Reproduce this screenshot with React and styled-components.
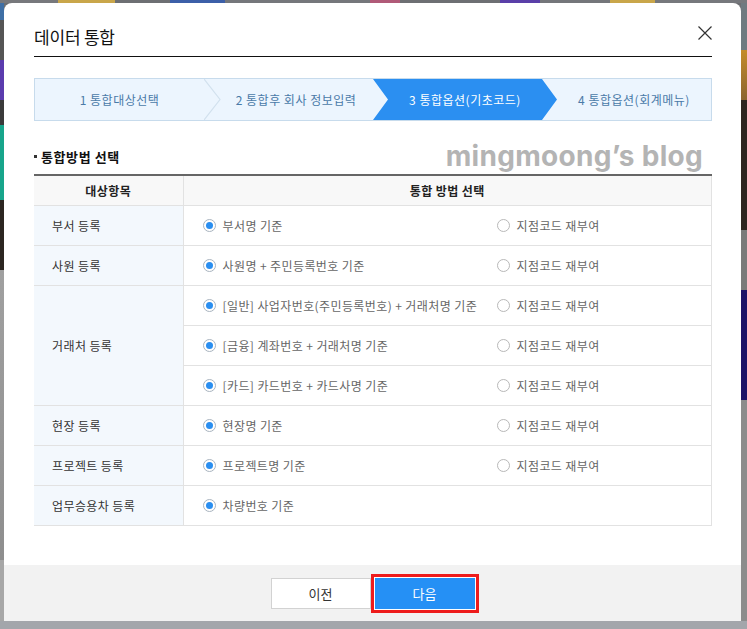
import React from 'react';
import styled, { createGlobalStyle } from 'styled-components';

const GlobalStyle = createGlobalStyle`
    * { box-sizing: border-box; }
    body {
        margin: 0;
        font-family: "Noto Sans CJK KR", "Noto Sans", sans-serif;
        color: #333;
    }
`;

const Backdrop = styled.div`
    width: 747px;
    height: 629px;
    padding: 3px 6px 8px 4px;
    background:
        linear-gradient(to right, #77787c 0, #77787c 58px, #c9a64a 58px, #c9a64a 115px, #6d6f73 115px, #6d6f73 170px, #3c5fa8 170px, #3c5fa8 225px, #75777b 225px, #75777b 370px, #b05a78 370px, #b05a78 400px, #6d6f73 400px, #6d6f73 500px, #5a3fa8 500px, #5a3fa8 540px, #74767a 540px, #74767a 610px, #c9a64a 610px, #c9a64a 655px, #76787c 655px) left top / 100% 3px no-repeat,
        linear-gradient(#a3a6ab, #a3a6ab) left bottom / 100% 8px no-repeat,
        linear-gradient(to bottom, #3f6fa5 0, #3f6fa5 20px, #555 20px, #555 60px, #5b3cae 60px, #5b3cae 100px, #3a3a3a 100px, #3a3a3a 125px, #17a58b 125px, #17a58b 200px, #2c2621 200px, #2c2621 270px, #a0a0a0 270px, #8e8e8e 560px, #a7a7a7 560px) left top / 4px 100% no-repeat,
        linear-gradient(to bottom, #6f7a80 0, #6f7a80 50px, #c48c2a 50px, #8a6530 100px, #2d2520 100px, #2d2520 230px, #7a7a7a 230px, #7a7a7a 290px, #1b1266 290px, #1b1266 400px, #8c8c8c 400px) right top / 6px 100% no-repeat,
        #6d6f73;
`;

const Modal = styled.div`
    height: 100%;
    background: #fff;
    border-radius: 8px 8px 0 0;
    display: flex;
    flex-direction: column;
    overflow: hidden;
`;

const Body = styled.div`
    padding: 0 29px 0 30px;
`;

const Header = styled.div`
    height: 54px;
    padding-top: 14px;
    display: flex;
    align-items: center;
    justify-content: space-between;
    border-bottom: 1px solid #111;
`;

const Title = styled.h1`
    margin: 0;
    font-size: 17px;
    font-weight: 400;
    color: #111;
    letter-spacing: -0.2px;
`;

const CloseButton = styled.button`
    width: 14px;
    height: 14px;
    padding: 0;
    border: 0;
    background: none;
    margin-top: -8px;
    display: flex;
    cursor: pointer;
`;

const Stepper = styled.div`
    margin-top: 21px;
    height: 43px;
    display: flex;
    background: #ecf5fe;
    border: 1px solid #c7dbec;
`;

const Step = styled.div`
    position: relative;
    flex: 0 0 ${p => (p.$active ? 'calc(25% + 15px)' : '25%')};
    margin-right: ${p => (p.$active ? '-15px' : '0')};
    padding: 0 ${p => (p.$active ? '15px' : '0')} 0 ${p => (p.$first ? '0' : '15px')};
    display: flex;
    align-items: center;
    justify-content: center;
    font-size: 12px;
    letter-spacing: 0.5px;
    color: ${p => (p.$active ? '#fff' : '#4a7aa8')};
    background: ${p => (p.$active ? '#2b8ff1' : 'transparent')};
    z-index: ${p => (p.$active ? 1 : 0)};
    clip-path: ${p => (p.$active
        ? 'polygon(0 0, calc(100% - 15px) 0, 100% 50%, calc(100% - 15px) 100%, 0 100%, 15px 50%)'
        : 'none')};
`;

const Chevron = styled.svg`
    position: absolute;
    left: 100%;
    top: 0;
    width: 17px;
    height: 100%;
    z-index: 1;
`;

const SectionRow = styled.div`
    margin-top: 18px;
    height: 34px;
    display: flex;
    align-items: center;
    justify-content: space-between;
    padding-right: 9px;
`;

const SectionTitle = styled.h2`
    margin: 0;
    font-size: 13px;
    font-weight: 700;
    letter-spacing: 0.6px;
    color: #111;
    display: flex;
    align-items: center;
    gap: 4px;

    &::before {
        content: '';
        width: 3px;
        height: 3px;
        background: #333;
    }
`;

const Watermark = styled.span`
    font-family: Inter, "Noto Sans", sans-serif;
    font-size: 28px;
    font-weight: 700;
    letter-spacing: 0.3px;
    color: #b4b4b4;
`;

const Table = styled.table`
    margin-top: 1px;
    width: 100%;
    border-collapse: collapse;
    table-layout: fixed;
    border-top: 2px solid #666;
    border-right: 1px solid #e2e2e2;
    font-size: 12px;
    letter-spacing: 0.4px;
`;

const HeadCell = styled.th`
    height: 30px;
    padding: 0;
    background: #f8f8f8;
    font-weight: 700;
    color: #222;
    border-bottom: 1px solid #e2e2e2;
    border-left: ${p => (p.$divided ? '1px solid #e2e2e2' : '0')};
`;

const LabelCell = styled.td`
    height: 40px;
    padding: 0 0 0 18px;
    background: #f3f8fd;
    color: #333;
    border-bottom: 1px solid #e2e2e2;
`;

const OptionCell = styled.td`
    height: 40px;
    padding: 0 0 0 19px;
    border-left: 1px solid #e2e2e2;
    border-bottom: 1px solid #e2e2e2;
`;

const OptionRow = styled.div`
    display: grid;
    grid-template-columns: 294px 1fr;
    align-items: center;
`;

const Option = styled.label`
    display: flex;
    align-items: center;
    gap: 7px;
    color: #666;
    white-space: nowrap;
`;

const Radio = styled.span`
    width: 13px;
    height: 13px;
    flex: none;
    border-radius: 50%;
    border: 1px solid ${p => (p.$checked ? '#a9b4bf' : '#b8b8b8')};
    background: #fff;
    display: flex;
    align-items: center;
    justify-content: center;

    &::after {
        content: '';
        width: 7px;
        height: 7px;
        border-radius: 50%;
        background: ${p => (p.$checked ? '#2a8ef0' : 'transparent')};
    }
`;

const Footer = styled.div`
    margin-top: auto;
    height: 56px;
    background: #f2f2f2;
    display: flex;
    align-items: center;
    justify-content: center;
    gap: 4px;
`;

const Button = styled.button`
    width: 100px;
    height: 31px;
    font-family: inherit;
    font-size: 13px;
    border: 1px solid ${p => (p.$primary ? '#2590f5' : '#d2d2d2')};
    background: ${p => (p.$primary ? '#2590f5' : '#fff')};
    color: ${p => (p.$primary ? '#fff' : '#333')};
    box-shadow: ${p => (p.$primary ? '0 0 0 1px #fff, 0 0 0 4px #ee1c1c' : 'none')};
    cursor: pointer;
`;

const steps = ['1 통합대상선택', '2 통합후 회사 정보입력', '3 통합옵션(기초코드)', '4 통합옵션(회계메뉴)'];

const rows = [
    { label: '부서 등록', options: ['부서명 기준'] },
    { label: '사원 등록', options: ['사원명 + 주민등록번호 기준'] },
    { label: '거래처 등록', span: 3, options: ['[일반] 사업자번호(주민등록번호) + 거래처명 기준'] },
    { options: ['[금융] 계좌번호 + 거래처명 기준'] },
    { options: ['[카드] 카드번호 + 카드사명 기준'] },
    { label: '현장 등록', options: ['현장명 기준'] },
    { label: '프로젝트 등록', options: ['프로젝트명 기준'] },
    { label: '업무승용차 등록', options: ['차량번호 기준'], single: true },
];

function RadioOption({ checked, children }) {
    return (
        <Option>
            <Radio $checked={checked} />
            {children}
        </Option>
    );
}

export default function App() {
    return (
        <>
            <GlobalStyle />
            <Backdrop>
                <Modal>
                    <Body>
                        <Header>
                            <Title>데이터 통합</Title>
                            <CloseButton aria-label="닫기">
                                <svg width="14" height="14" viewBox="0 0 14 14">
                                    <path d="M0.5 0.5 L13.5 13.5 M13.5 0.5 L0.5 13.5" stroke="#333" strokeWidth="1.2" fill="none" />
                                </svg>
                            </CloseButton>
                        </Header>

                        <Stepper>
                            {steps.map((text, i) => (
                                <Step key={text} $first={i === 0} $active={i === 2}>
                                    {text}
                                    {i === 0 && (
                                        <Chevron viewBox="0 0 17 41" preserveAspectRatio="none">
                                            <polyline points="0,0 16,20.5 0,41" fill="none" stroke="#d2e1ee" strokeWidth="1.2" />
                                        </Chevron>
                                    )}
                                </Step>
                            ))}
                        </Stepper>

                        <SectionRow>
                            <SectionTitle>통합방법 선택</SectionTitle>
                            <Watermark>mingmoong’s blog</Watermark>
                        </SectionRow>

                        <Table>
                            <colgroup>
                                <col style={{ width: '149px' }} />
                                <col />
                            </colgroup>
                            <thead>
                                <tr>
                                    <HeadCell>대상항목</HeadCell>
                                    <HeadCell $divided>통합 방법 선택</HeadCell>
                                </tr>
                            </thead>
                            <tbody>
                                {rows.map((row, i) => (
                                    <tr key={i}>
                                        {row.label && <LabelCell rowSpan={row.span || 1}>{row.label}</LabelCell>}
                                        <OptionCell>
                                            <OptionRow>
                                                <RadioOption checked>{row.options[0]}</RadioOption>
                                                {!row.single && <RadioOption>지점코드 재부여</RadioOption>}
                                            </OptionRow>
                                        </OptionCell>
                                    </tr>
                                ))}
                            </tbody>
                        </Table>
                    </Body>

                    <Footer>
                        <Button>이전</Button>
                        <Button $primary>다음</Button>
                    </Footer>
                </Modal>
            </Backdrop>
        </>
    );
}
